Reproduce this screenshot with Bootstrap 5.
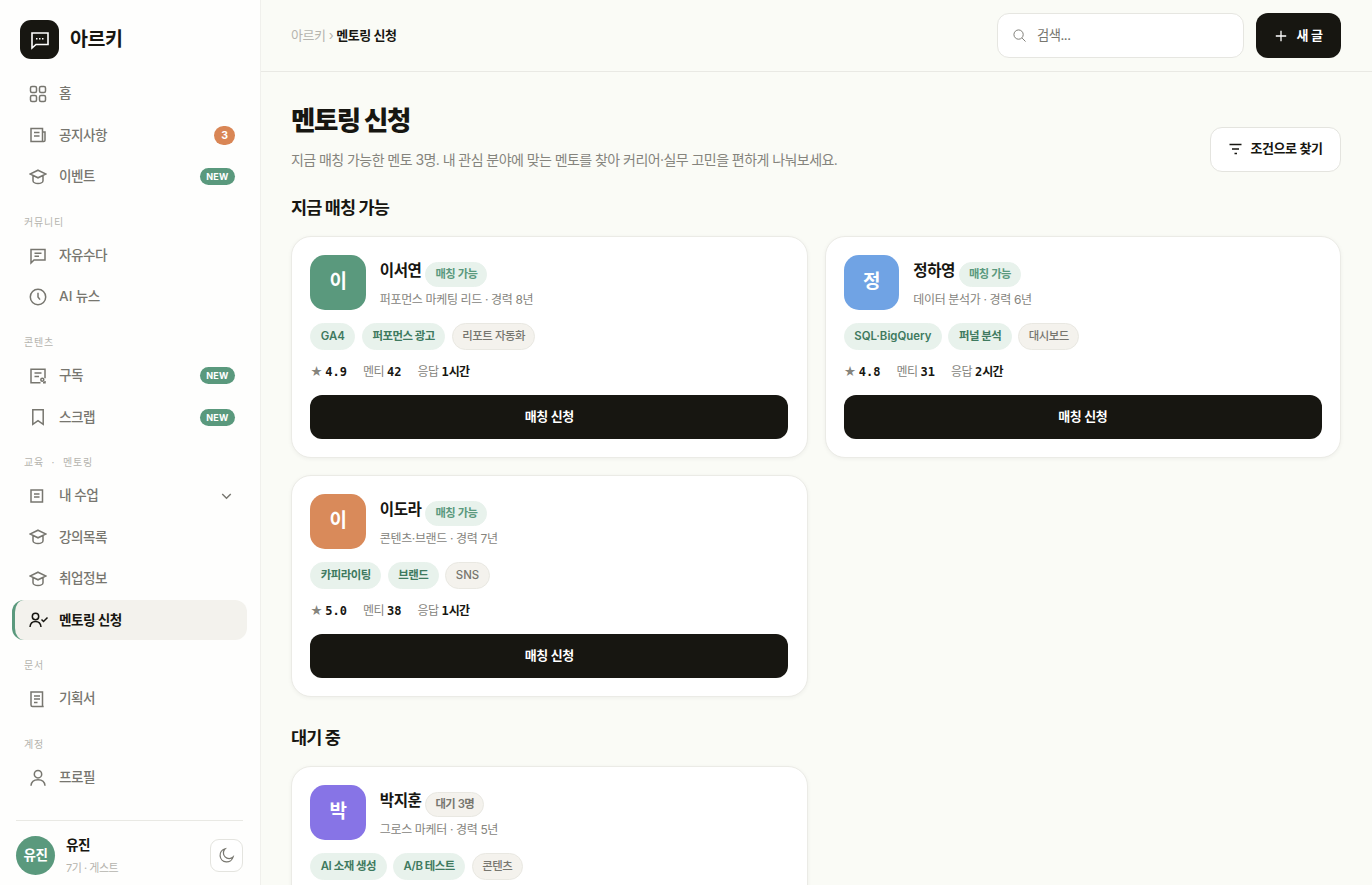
<!DOCTYPE html>
<html lang="ko">
<head>
<meta charset="utf-8">
<meta name="viewport" content="width=device-width, initial-scale=1">
<title>멘토링 신청 · 아르키</title>
<link rel="stylesheet" href="https://cdn.jsdelivr.net/npm/bootstrap@5.3.0/dist/css/bootstrap.min.css">
<style>
:root{--ink:#171611;--muted:#77766f;--faint:#b5b4ae;--line:#e9e9e4;--green:#5a997d;--bg:#fafbf6}
body{font-family:"Inter","Noto Sans CJK KR",sans-serif;font-size:13.6px;letter-spacing:-.035em;color:var(--ink);background:var(--bg);height:885px;overflow:hidden;line-height:1.4}
svg{fill:none;stroke:currentColor;stroke-width:1.5;flex:none}
.sidebar{width:261px;background:#fefefd;border-right:1px solid #f0f0ec;height:885px}
.brand{padding:20px 20px 0;height:73.8px;gap:11px}
.brand-icon{width:39px;height:39px;border-radius:11px;background:var(--ink);color:#fff}
.brand-name{font-size:19.5px;font-weight:700;line-height:39px}
.side-nav{padding:0 13px 0 12px}
.side-link{height:40.4px;margin-bottom:1px;padding:0 12px 0 17px;gap:13px;color:var(--muted);text-decoration:none;border-radius:12px;font-weight:500}
.side-link svg{width:18px;height:18px;margin-right:-1px}
.side-link.active{background:#f3f2ed;color:var(--ink);font-weight:700;border-left:3px solid var(--green);padding-left:14px}
.side-label{height:37.4px;padding:17px 12px 0;font-size:10px;letter-spacing:.08em;color:var(--faint);line-height:14px}
.pill-new{background:var(--green);color:#fff;font-size:9px;font-weight:700;letter-spacing:.02em;border-radius:9px;height:17px;line-height:17px;padding:0 6.5px}
.pill-count{background:#d98655;color:#fff;font-size:10.5px;font-weight:700;border-radius:10px;height:19px;line-height:19px;width:21px;text-align:center}
.profile{margin:0 17px 0 16px;border-top:1px solid var(--line);height:65px;padding-top:5px;gap:11px}
.profile-avatar{width:39px;height:39px;background:var(--green);color:#fff;font-weight:600;font-size:13.6px}
.theme-btn{width:33px;height:33px;border:1px solid #e4e4df;border-radius:9px;color:var(--muted);background:#fff}
.topbar{height:72px;border-bottom:1px solid var(--line);padding:0 31px 0 30px;gap:12px}
.crumb{color:var(--faint);font-size:13px}
.search{width:247px;height:45px;border:1px solid #e6e6e1;border-radius:12px;background:#fff;padding:0 15px;gap:11px;color:#77766f}
.btn-ink{background:var(--ink);color:#fff;font-weight:600;font-size:13px;letter-spacing:-.035em;border-radius:12px;height:44.5px;border:0}
.btn-ink:hover{background:#33322c;color:#fff}
.btn-line{background:#fff;border:1px solid #e4e4df;border-radius:12px;height:45px;width:131px;font-size:13px;font-weight:600;letter-spacing:-.035em;color:var(--ink)}
.content{padding:0 31px 0 30px}
.page-title{font-size:26.5px;font-weight:800;letter-spacing:-.055em;line-height:34px;margin:0}
.page-sub{font-size:14px;color:#85847d;line-height:20px;margin:13px 0 0;letter-spacing:-.04em}
.section-title{font-size:17.5px;font-weight:700;letter-spacing:-.05em;line-height:24px;margin:0}
.mentor-grid{display:grid;grid-template-columns:1fr 1fr;gap:17px}
.mentor{background:#fff;border:1px solid #ebebe6;border-radius:20px;padding:18.3px;height:222px;box-shadow:0 1px 4px rgba(20,20,10,.05)}
.mentor-avatar{width:55.5px;height:55.5px;border-radius:15px;color:#fff;font-size:19px;font-weight:600;flex:none}
.mentor-name{font-size:15.6px;font-weight:600;line-height:25px}
.mentor-role{font-size:12px;color:#85847d;line-height:18px;margin-top:4px;letter-spacing:-.03em}
.state{height:25px;line-height:23px;border:1px solid #e8f2ec;background:#e8f2ec;color:#5a997d;border-radius:13px;padding:0 9px;font-size:11.3px;font-weight:600}
.state.wait,.skill.plain{background:#f4f2ed;border-color:#e9e8e2;color:#77766f}
.skills{gap:6.5px;margin-top:12.5px}
.skill{height:27px;line-height:25px;border:1px solid #e8f2ec;background:#e8f2ec;color:#3f7a5f;border-radius:14px;padding:0 9.5px;font-size:11.4px;font-weight:600}
.skill.plain{font-weight:500}
.latin{letter-spacing:0}
.stats{gap:16px;margin-top:13.5px;font-size:12px;line-height:18px;color:#85847d}
.stats b{font-family:"DejaVu Sans Mono","Noto Sans CJK KR",monospace;font-weight:700;color:var(--ink);letter-spacing:0}
.stats b i{font-style:normal;letter-spacing:-.06em}
.mentor .btn-ink{margin-top:13.5px;height:44px}
</style>
</head>
<body class="d-flex">
<svg class="d-none">
<symbol id="cap" viewBox="0 0 18 18"><path d="M9 2.2 17 6 9 9.800 1 6ZM4 7.500v5.200c0 1.500 2.200 2.900 5 2.900s5-1.400 5-2.900V7.500"/></symbol>
</svg>
<aside class="sidebar d-flex flex-column flex-shrink-0">
<div class="brand d-flex">
<div class="brand-icon d-flex align-items-center justify-content-center"><svg width="20" height="20" viewBox="0 0 20 20"><path stroke-width="1.6" d="M2 3h16v11.500H6L2 18Z"/><path stroke-width="1.500" stroke-dasharray="1.500 1.500" d="M6 8.800h8"/></svg></div>
<div class="brand-name">아르키</div>
</div>
<nav class="side-nav flex-grow-1">
<a class="side-link d-flex align-items-center" href="#"><svg viewBox="0 0 18 18"><rect x="1.500" y="1.500" width="6" height="6" rx="1.500"/><rect x="10.500" y="1.500" width="6" height="6" rx="1.500"/><rect x="1.500" y="10.500" width="6" height="6" rx="1.500"/><rect x="10.500" y="10.500" width="6" height="6" rx="1.500"/></svg>홈</a>
<a class="side-link d-flex align-items-center" href="#"><svg viewBox="0 0 18 18"><path d="M2 2.500h11.500v13H2ZM13.500 6H16v8.200q0 1.300-1.300 1.300h-1.200M5 6.500h5.500M5 10h5.500"/></svg>공지사항<span class="pill-count ms-auto">3</span></a>
<a class="side-link d-flex align-items-center" href="#"><svg><use href="#cap"/></svg>이벤트<span class="pill-new ms-auto">NEW</span></a>
<div class="side-label">커뮤니티</div>
<a class="side-link d-flex align-items-center" href="#"><svg viewBox="0 0 18 18"><path d="M2 2.500h14v10.500H5L2 16ZM5.500 6.300h7M5.500 9.300h4.500"/></svg>자유수다</a>
<a class="side-link d-flex align-items-center" href="#"><svg viewBox="0 0 18 18"><circle cx="9" cy="9" r="7.700"/><path d="M9 4.800V9l2 2.600"/></svg><span class="latin">AI</span><span style="margin-left:-9.500px">뉴스</span></a>
<div class="side-label">콘텐츠</div>
<a class="side-link d-flex align-items-center" href="#"><svg viewBox="0 0 18 18"><path d="M11.500 15.800H2V2.200h14v9M5.500 6h7M5.500 9.500h4.500M16 14v1.800h-2"/><circle cx="13.300" cy="12.800" r="1.500"/></svg>구독<span class="pill-new ms-auto">NEW</span></a>
<a class="side-link d-flex align-items-center" href="#"><svg viewBox="0 0 18 18"><path d="M3.800 1.800h10.400v14.600L9 12.700l-5.200 3.700Z"/></svg>스크랩<span class="pill-new ms-auto">NEW</span></a>
<div class="side-label" style="word-spacing:4px">교육 · 멘토링</div>
<a class="side-link d-flex align-items-center" href="#"><svg viewBox="0 0 18 18"><path d="M2 3h11.500v12H2ZM5 7h5.500M5 10h5.500"/></svg>내 수업<svg class="ms-auto me-0" style="width:17px" viewBox="0 0 18 18"><path d="m4.500 7 4.500 4.500L13.500 7"/></svg></a>
<a class="side-link d-flex align-items-center" href="#"><svg><use href="#cap"/></svg>강의목록</a>
<a class="side-link d-flex align-items-center" href="#"><svg><use href="#cap"/></svg>취업정보</a>
<a class="side-link active d-flex align-items-center" href="#"><svg viewBox="0 0 18 18" overflow="visible"><circle cx="6.500" cy="5.500" r="3.200"/><path d="M1 16c.3-3.500 2.500-5.500 5.500-5.500s5.200 2 5.500 5.500M12.500 8.500l2 2 4-4"/></svg>멘토링 신청</a>
<div class="side-label">문서</div>
<a class="side-link d-flex align-items-center" href="#"><svg viewBox="0 0 18 18"><path d="M2 2h11.500v14.500H3.500Q2 16.500 2 15ZM13.500 16.500h1.200M5 6h6M5 9h6M5 12.500h3.500"/></svg>기획서</a>
<div class="side-label">계정</div>
<a class="side-link d-flex align-items-center" href="#"><svg viewBox="0 0 18 18"><circle cx="9" cy="5.200" r="3.700"/><path d="M2 16.800c.3-4 3-6 7-6s6.700 2 7 6"/></svg>프로필</a>
</nav>
<div class="profile d-flex align-items-center">
<div class="profile-avatar rounded-circle d-flex align-items-center justify-content-center">유진</div>
<div><div class="fw-semibold" style="line-height:18px">유진</div><div style="font-size:11px;line-height:16px;margin-top:6px;color:var(--faint)">7기 · 게스트</div></div>
<button class="theme-btn ms-auto p-0 d-flex align-items-center justify-content-center"><svg width="17" height="17" viewBox="0 0 18 18" stroke-width="1.300"><path stroke-width="1.300" d="M7.500 2A7 7 0 1 0 16 10.500 5.800 5.800 0 0 1 7.500 2Z"/></svg></button>
</div>
</aside>
<main class="flex-grow-1">
<header class="topbar d-flex align-items-center">
<div class="crumb me-auto">아르키 › <span class="fw-semibold" style="color:var(--ink)">멘토링 신청</span></div>
<div class="search d-flex align-items-center"><svg width="13" height="13" viewBox="0 0 14 14" stroke-width="1"><circle cx="6" cy="6" r="5" stroke-width="1"/><path stroke-width="1" d="m9.800 9.800 3.700 3.700"/></svg><span style="font-size:13.300px">검색...</span></div>
<button class="btn btn-ink d-flex align-items-center justify-content-center p-0" style="width:85px;gap:10px"><svg width="12" height="12" viewBox="0 0 12 12"><path stroke-width="1.300" d="M6 .8v10.400M.8 6h10.400"/></svg>새 글</button>
</header>
<div class="content">
<div class="d-flex justify-content-between" style="padding-top:31px">
<div><h1 class="page-title">멘토링 신청</h1><p class="page-sub">지금 매칭 가능한 멘토 3명. 내 관심 분야에 맞는 멘토를 찾아 커리어·실무 고민을 편하게 나눠보세요.</p></div>
<button class="btn btn-line d-flex align-items-center justify-content-center p-0" style="margin-top:23.500px;gap:9px"><svg width="13" height="12" viewBox="0 0 13 12"><path stroke-width="1.400" d="M.5 1.500h12M3 6h7M5.500 10.500h2.500"/></svg>조건으로 찾기</button>
</div>
<h2 class="section-title" style="margin:24px 0 16px">지금 매칭 가능</h2>
<div class="mentor-grid">
<article class="mentor">
<div class="d-flex" style="gap:14px"><div class="mentor-avatar d-flex align-items-center justify-content-center" style="background:#5a997d">이</div><div style="padding-top:3px"><div class="d-flex" style="gap:4px"><span class="mentor-name">이서연</span><span class="state mt-1">매칭 가능</span></div><div class="mentor-role">퍼포먼스 마케팅 리드 · 경력 8년</div></div></div>
<div class="skills d-flex"><span class="skill latin">GA4</span><span class="skill">퍼포먼스 광고</span><span class="skill plain">리포트 자동화</span></div>
<div class="stats d-flex"><span>★ <b>4.9</b></span><span>멘티 <b>42</b></span><span>응답 <b>1<i>시간</i></b></span></div>
<button class="btn btn-ink w-100 p-0">매칭 신청</button>
</article>
<article class="mentor">
<div class="d-flex" style="gap:14px"><div class="mentor-avatar d-flex align-items-center justify-content-center" style="background:#70a3e4">정</div><div style="padding-top:3px"><div class="d-flex" style="gap:4px"><span class="mentor-name">정하영</span><span class="state mt-1">매칭 가능</span></div><div class="mentor-role">데이터 분석가 · 경력 6년</div></div></div>
<div class="skills d-flex"><span class="skill latin">SQL·BigQuery</span><span class="skill">퍼널 분석</span><span class="skill plain">대시보드</span></div>
<div class="stats d-flex"><span>★ <b>4.8</b></span><span>멘티 <b>31</b></span><span>응답 <b>2<i>시간</i></b></span></div>
<button class="btn btn-ink w-100 p-0">매칭 신청</button>
</article>
<article class="mentor">
<div class="d-flex" style="gap:14px"><div class="mentor-avatar d-flex align-items-center justify-content-center" style="background:#d98a5a">이</div><div style="padding-top:3px"><div class="d-flex" style="gap:4px"><span class="mentor-name">이도라</span><span class="state mt-1">매칭 가능</span></div><div class="mentor-role">콘텐츠·브랜드 · 경력 7년</div></div></div>
<div class="skills d-flex"><span class="skill">카피라이팅</span><span class="skill">브랜드</span><span class="skill plain latin">SNS</span></div>
<div class="stats d-flex"><span>★ <b>5.0</b></span><span>멘티 <b>38</b></span><span>응답 <b>1<i>시간</i></b></span></div>
<button class="btn btn-ink w-100 p-0">매칭 신청</button>
</article>
</div>
<h2 class="section-title" style="margin:29px 0 16px">대기 중</h2>
<div class="mentor-grid">
<article class="mentor">
<div class="d-flex" style="gap:14px"><div class="mentor-avatar d-flex align-items-center justify-content-center" style="background:#8774e6">박</div><div style="padding-top:3px"><div class="d-flex" style="gap:4px"><span class="mentor-name">박지훈</span><span class="state wait mt-1">대기 3명</span></div><div class="mentor-role">그로스 마케터 · 경력 5년</div></div></div>
<div class="skills d-flex"><span class="skill">AI 소재 생성</span><span class="skill">A/B 테스트</span><span class="skill plain">콘텐츠</span></div>
</article>
</div>
</div>
</main>
<script src="https://cdn.jsdelivr.net/npm/bootstrap@5.3.0/dist/js/bootstrap.bundle.min.js"></script>
</body>
</html>
